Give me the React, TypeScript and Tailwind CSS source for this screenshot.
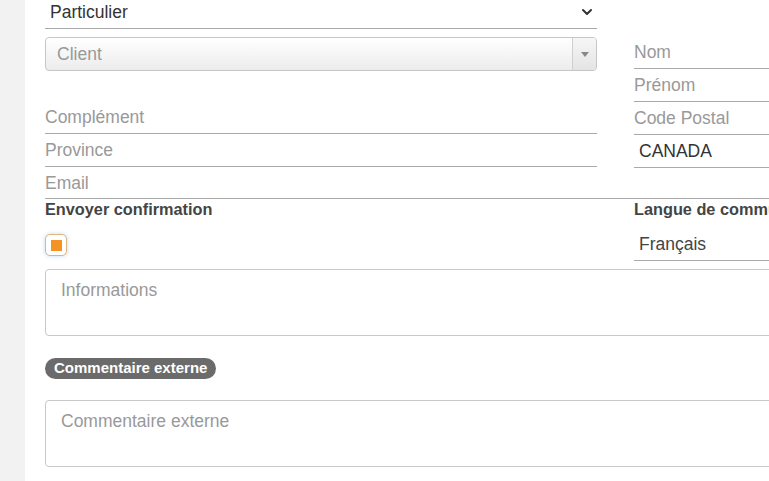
import { ChevronDown } from "lucide-react";

const line = "border-b border-[#a9a9a9]";

function Field({ label, value, className = "" }: { label?: string; value?: string; className?: string }) {
  return (
    <div className={"flex h-[33px] items-center " + line + " " + className}>
      {value ? (
        <span className="pl-[5px] text-[17.5px] text-[#333]">{value}</span>
      ) : (
        <span className="text-[17.5px] text-[#999]">{label}</span>
      )}
    </div>
  );
}

function Textarea({ placeholder }: { placeholder: string }) {
  return (
    <div className="h-[67px] w-[1141px] rounded-[4px] border border-[#c8c8c8] px-[15px] pt-[7px] text-[17.5px] text-[#999]">
      {placeholder}
    </div>
  );
}

export default function App() {
  return (
    <div className="flex h-[481px] w-[769px] overflow-hidden bg-white font-['Liberation_Sans',Arial,sans-serif]">
      <div className="w-[25px] shrink-0 bg-[#f2f2f2]" />
      <div className="-mt-[4px] w-[1161px] shrink-0 pl-[20px]">
        <div className="flex gap-[37px]">
          <div className="flex w-[552px] flex-col">
            <div className={"flex h-[33px] items-center justify-between pl-[5px] pr-[2px] " + line}>
              <span className="text-[17.5px] text-[#333]">Particulier</span>
              <ChevronDown size={16} strokeWidth={3} className="text-[#333]" />
            </div>
            <div className="mt-[8px] flex h-[34px] overflow-hidden rounded-[4px] border border-[#c6c6c6] bg-gradient-to-b from-white to-[#ececec]">
              <span className="flex flex-1 items-center pl-[11px] text-[17.5px] text-[#999]">Client</span>
              <div className="flex w-[24px] items-center justify-center border-l border-[#cfcfcf] bg-gradient-to-b from-[#f6f6f6] to-[#e4e4e4]">
                <svg width="8" height="5" viewBox="0 0 8 5">
                  <path d="M0 0h8L4 5z" fill="#888" />
                </svg>
              </div>
            </div>
            <Field label="Complément" className="mt-[30px]" />
            <Field label="Province" />
          </div>
          <div className="flex w-[552px] flex-col pt-[40px]">
            <Field label="Nom" />
            <Field label="Prénom" />
            <Field label="Code Postal" className="h-[32px]" />
            <Field value="CANADA" />
          </div>
        </div>
        <div className={"flex h-[31px] items-center text-[17.5px] text-[#999] " + line}>Email</div>
        <div className="flex gap-[37px]">
          <div className="w-[552px]">
            <div className="h-[20px] text-[16.3px] leading-[20px] font-bold text-[#444]">Envoyer confirmation</div>
            <div className="mt-[15px] flex h-[22px] w-[22px] items-center justify-center rounded-[5px] border border-[#e2b57f] bg-white shadow-[0_0_4px_rgba(120,170,230,0.45)]">
              <div className="h-[11px] w-[11px] bg-[#f39323]" />
            </div>
          </div>
          <div className="w-[552px]">
            <div className="h-[20px] text-[16.3px] leading-[20px] font-bold text-[#444]">Langue de communication</div>
            <div className={"mt-[9px] flex h-[33px] items-center pl-[5px] " + line}>
              <span className="text-[17.5px] text-[#444]">Français</span>
            </div>
          </div>
        </div>
        <div className="mt-[8px]">
          <Textarea placeholder="Informations" />
        </div>
        <div className="mt-[22px] inline-flex h-[21px] items-center rounded-full bg-[#6b6b6b] px-[9px] text-[15px] font-bold text-white">
          Commentaire externe
        </div>
        <div className="mt-[20px]">
          <Textarea placeholder="Commentaire externe" />
        </div>
      </div>
    </div>
  );
}
